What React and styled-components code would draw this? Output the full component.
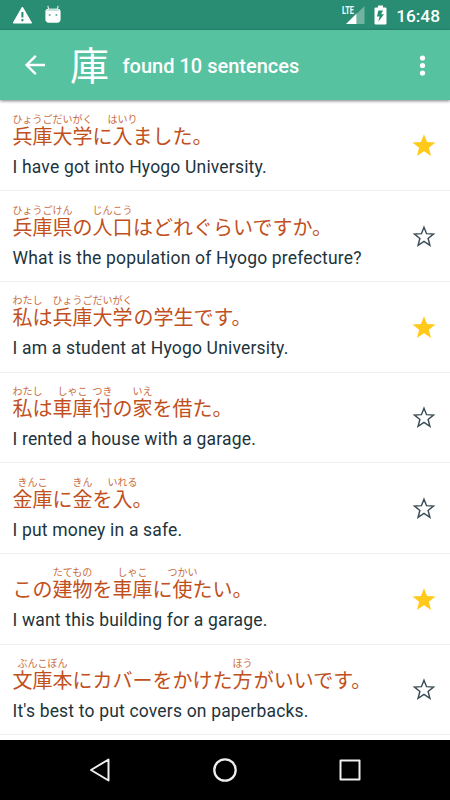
import styled, { createGlobalStyle } from "styled-components"
import { useState } from "react"

const jpFont = `"Noto Sans CJK JP", "Noto Sans", sans-serif`

const sentences = [
    {
        parts: [["兵庫大学","ひょうごだいがく"],["に"],["入","はいり"],["ました。"]],
        english: "I have got into Hyogo University.",
        starred: true,
    },
    {
        parts: [["兵庫県","ひょうごけん"],["の"],["人口","じんこう"],["はどれぐらいですか。"]],
        english: "What is the population of Hyogo prefecture?",
        starred: false,
    },
    {
        parts: [["私","わたし"],["は"],["兵庫大学","ひょうごだいがく"],["の学生です。"]],
        english: "I am a student at Hyogo University.",
        starred: true,
    },
    {
        parts: [["私","わたし"],["は"],["車庫","しゃこ"],["付","つき"],["の"],["家","いえ"],["を借た。"]],
        english: "I rented a house with a garage.",
        starred: false,
    },
    {
        parts: [["金庫","きんこ"],["に"],["金","きん"],["を"],["入","いれる"],["。"]],
        english: "I put money in a safe.",
        starred: false,
    },
    {
        parts: [["この"],["建物","たてもの"],["を"],["車庫","しゃこ"],["に"],["使","つかい"],["たい。"]],
        english: "I want this building for a garage.",
        starred: true,
    },
    {
        parts: [["文庫本","ぶんこぼん"],["にカバーをかけた"],["方","ほう"],["がいいです。"]],
        english: "It's best to put covers on paperbacks.",
        starred: false,
    },
]

const GlobalStyle = createGlobalStyle`
    * {
        box-sizing: border-box;
    }

    body {
        margin: 0;
        background: #fff;
        font-family: Roboto, sans-serif;
    }

    svg {
        display: block;
        flex-shrink: 0;
    }
`

const Screen = styled.div`
    display: flex;
    flex-direction: column;
    width: 450px;
    height: 800px;
    overflow: hidden;
`

const StatusBar = styled.div`
    display: flex;
    align-items: center;
    flex-shrink: 0;
    height: 30px;
    padding: 0 10px 0 12px;
    background: #288d73;
    color: #fff;
`

const Notifications = styled.div`
    display: flex;
    align-items: center;
    gap: 12px;
    flex: 1;
`

const SystemIcons = styled.div`
    display: flex;
    align-items: center;
    gap: 9px;
`

const Clock = styled.span`
    font-size: 17.3px;
    font-weight: 500;
    line-height: 30px;
    padding-top: 1px;
`

const Toolbar = styled.header`
    display: flex;
    align-items: center;
    flex-shrink: 0;
    height: 70px;
    padding: 0 15px 0 22px;
    background: #57c2a0;
    box-shadow: 0 1px 3px rgba(0, 0, 0, .5);
    color: #fff;
    z-index: 1;
`

const IconButton = styled.button`
    display: flex;
    align-items: center;
    justify-content: center;
    padding: 0;
    border: none;
    background: none;
    color: inherit;
    cursor: pointer;
`

const Kanji = styled.span`
    margin-left: 22px;
    font-family: ${jpFont};
    font-size: 39px;
    line-height: 40px;
    height: 45px;
`

const Title = styled.h1`
    flex: 1;
    margin: 0 0 0 13.5px;
    font-size: 20px;
    font-weight: 500;
    line-height: 24px;
    padding-top: 1px;
`

const List = styled.ul`
    flex: 1;
    margin: 0;
    padding: .8px 0 0;
    list-style: none;
    overflow: hidden;
`

const Row = styled.li`
    display: flex;
    align-items: center;
    height: 90.67px;
    padding: 0 13px 0 12.5px;
    border-bottom: 1.5px solid #efefef;
`

const Sentence = styled.div`
    display: flex;
    flex-direction: column;
    gap: 11px;
    flex: 1;
`

const Japanese = styled.div`
    display: flex;
    font-family: ${jpFont};
    color: #c1501c;
`

/* A reading wider than its kanji hangs over both sides, except at the line start */
const Word = styled.span`
    display: flex;
    flex-direction: column;
    align-items: center;
    gap: 2px;
    width: ${({ $length }) => $length * 20}px;
    white-space: nowrap;

    &:first-child {
        align-items: ${({ $wide }) => $wide ? "flex-start" : "center"};
    }
`

const Reading = styled.span`
    height: 10px;
    font-size: 10px;
    line-height: 10px;
    color: #cb6d40;
`

const Base = styled.span`
    font-size: 20px;
    line-height: 20px;
`

const English = styled.p`
    margin: 0;
    font-size: 17.5px;
    line-height: 20px;
    letter-spacing: .18px;
    color: #1d343c;
`

const NavBar = styled.nav`
    display: flex;
    align-items: center;
    justify-content: space-between;
    flex-shrink: 0;
    height: 60px;
    padding: 0 87px;
    background: #000;
    color: #eee;
`

const BackIcon = () => (
    <svg width="26" height="26" viewBox="0 0 26 26" fill="none" stroke="currentColor" strokeWidth="2.4">
        <path d="M23 13H5M13.8 3.8 4.6 13l9.2 9.2" />
    </svg>
)

const MoreIcon = () => (
    <svg width="25" height="25" viewBox="0 0 25 25" fill="currentColor">
        <circle cx="12.5" cy="5" r="2.6" />
        <circle cx="12.5" cy="12.5" r="2.6" />
        <circle cx="12.5" cy="20" r="2.6" />
    </svg>
)

const WarningIcon = () => (
    <svg width="21" height="18" viewBox="0 0 21 18">
        <path d="M10.4 1 19.6 17H1.2z" fill="#fff" stroke="#fff" strokeWidth="1" strokeLinejoin="round" />
        <path d="M10.4 6v5.5M10.4 13v2.2" stroke="#288d73" strokeWidth="2" />
    </svg>
)

const DroidIcon = () => (
    <svg width="16" height="20" viewBox="0 0 16 20">
        <path d="M4 5 2.8.8M12 5 13.2.8" stroke="#d5eae4" strokeWidth="1.2" />
        <path d="M.4 7Q.4 3.8 3.5 3.8h9Q15.6 3.8 15.6 7v7Q15.6 17.8 12 17.8H4Q.4 17.8.4 14z" fill="#fff" />
        <path d="M1.5 6Q2.5 3.8 5 3.8h6q2.5 0 3.5 2.2z" fill="#c5e2da" />
        <circle cx="4.6" cy="10" r="1" fill="#5fac98" />
        <circle cx="11.4" cy="10" r="1" fill="#5fac98" />
    </svg>
)

const SignalIcon = () => (
    <svg width="24" height="20" viewBox="0 0 24 20">
        <text x="1" y="9" fill="#fff" fontFamily="Roboto" fontWeight="700" fontSize="10.5" textLength="11.8" lengthAdjust="spacingAndGlyphs">LTE</text>
        <path d="M23.5 1v18h-8V9z" fill="#6fb3a0" />
        <path d="M15.5 8.5V19H5z" fill="#fff" />
    </svg>
)

const BatteryIcon = () => (
    <svg width="13" height="20" viewBox="0 0 13 20">
        <path d="M4 .5h5v2h2.2q1.3 0 1.3 1.3v14.400q0 1.3-1.3 1.3H1.8Q.5 19.5.5 18.2V3.8Q.5 2.5 1.8 2.5H4z" fill="#fff" />
        <path d="M9 5.500H4.300L3 11.500h2.600L4.300 16.800 10 9.300H7.200z" fill="#288d73" />
    </svg>
)

const StarIcon = ({ filled }) => (
    <svg width="26.4" height="26.4" viewBox="-12.5 -13.6 25.4 25.4">
        {filled
            ? <path d="M0-11.5 2.95-4 11-3.56 4.7 1.53 6.8 9.4 0 4.95-6.8 9.4-4.7 1.53-11-3.56-2.95-4z" fill="#ffca1a" />
            : <path d="M0-9.6 2.45-3.35 9.15-2.95 3.95 1.28 5.7 7.85 0 4.15-5.7 7.85-3.95 1.28-9.15-2.95-2.45-3.35z" fill="none" stroke="#3a4d56" strokeWidth="1.4" />
        }
    </svg>
)

function SentenceRow({ sentence }) {
    const [starred,setStarred] = useState(sentence.starred);

    return (
        <Row>
            <Sentence>
                <Japanese>
                    {sentence.parts.map(([base,reading],index) =>
                        <Word key={index} $length={base.length} $wide={reading && reading.length > base.length * 2}>
                            <Reading>{reading}</Reading>
                            <Base>{base}</Base>
                        </Word>
                    )}
                </Japanese>
                <English>{sentence.english}</English>
            </Sentence>
            <IconButton onClick={() => setStarred(!starred)}>
                <StarIcon filled={starred} />
            </IconButton>
        </Row>
    )
}

function App() {
    return (
        <Screen>
            <GlobalStyle />
            <StatusBar>
                <Notifications>
                    <WarningIcon />
                    <DroidIcon />
                </Notifications>
                <SystemIcons>
                    <SignalIcon />
                    <BatteryIcon />
                    <Clock>16:48</Clock>
                </SystemIcons>
            </StatusBar>
            <Toolbar>
                <IconButton><BackIcon /></IconButton>
                <Kanji>庫</Kanji>
                <Title>found 10 sentences</Title>
                <IconButton><MoreIcon /></IconButton>
            </Toolbar>
            <List>
                {sentences.map((sentence) => <SentenceRow sentence={sentence} key={sentence.english} />)}
            </List>
            <NavBar>
                <IconButton>
                    <svg width="26" height="26" viewBox="0 0 26 26" fill="none" stroke="currentColor" strokeWidth="2" strokeLinejoin="round">
                        <path d="M21.5 2.5v21L4 13z" />
                    </svg>
                </IconButton>
                <IconButton>
                    <svg width="26" height="26" viewBox="0 0 26 26" fill="none" stroke="currentColor" strokeWidth="2.3">
                        <circle cx="13" cy="13" r="10.7" />
                    </svg>
                </IconButton>
                <IconButton>
                    <svg width="26" height="26" viewBox="0 0 26 26" fill="none" stroke="currentColor" strokeWidth="2" strokeLinejoin="round">
                        <path d="M3.5 3.5h19v19h-19z" />
                    </svg>
                </IconButton>
            </NavBar>
        </Screen>
    )
}

export default App
